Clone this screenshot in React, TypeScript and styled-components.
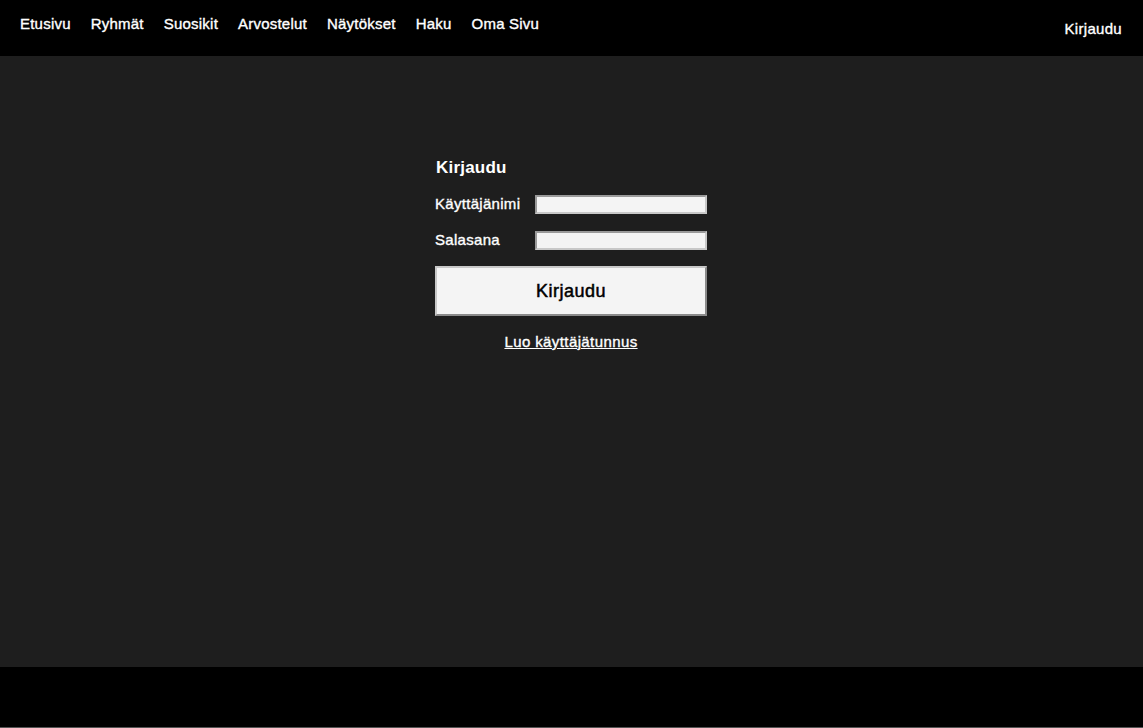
import React from "react";
import styled, { createGlobalStyle } from "styled-components";

const Global = createGlobalStyle`
  html, body { margin: 0; padding: 0; background: #000; }
  body { font-family: "Liberation Sans", Arial, sans-serif; color: #fff; }
  * { box-sizing: border-box; }
`;

const Page = styled.div`
  display: flex;
  flex-direction: column;
  min-height: 728px;
`;

const Header = styled.header`
  height: 56px;
  background: #000;
  display: flex;
  justify-content: space-between;
  padding: 0 21px 0 20px;
`;

const NavList = styled.nav`
  display: flex;
  gap: 20px;
  padding-top: 15px;
`;

const NavLink = styled.a`
  color: #fff;
  font-size: 15px;
  line-height: 17px;
  letter-spacing: 0.22px;
  text-decoration: none;
  font-weight: 400;
  -webkit-text-stroke: 0.35px #fff;
`;

const LoginLink = styled(NavLink)`
  padding-top: 20px;
  letter-spacing: 0.3px;
`;

const Main = styled.main`
  flex: 1;
  background: #1e1e1e;
  display: flex;
  justify-content: center;
  padding-top: 101px;
  padding-right: 1px;
`;

const Form = styled.form`
  width: 272px;
  display: flex;
  flex-direction: column;
`;

const Title = styled.h2`
  margin: 0 0 16px 1px;
  font-size: 17px;
  line-height: 22px;
  letter-spacing: 0.2px;
  font-weight: 700;
`;

const Row = styled.div`
  display: flex;
  align-items: center;
  margin-bottom: 17px;
`;

const Label = styled.label`
  width: 100px;
  font-size: 15px;
  line-height: 17px;
  margin-top: -2px;
  letter-spacing: 0.3px;
  -webkit-text-stroke: 0.35px #fff;
`;

const Input = styled.input`
  width: 172px;
  height: 19px;
  background: #f4f4f4;
  border: 2px solid #9a9a9a;
  border-right-color: #c8c8c8;
  border-bottom-color: #c8c8c8;
  padding: 0 2px;
  font-size: 13px;
`;

const Button = styled.button`
  width: 272px;
  height: 50px;
  margin-top: -1px;
  background: #f4f4f4;
  border: 2px solid #c8c8c8;
  border-right-color: #8a8a8a;
  border-bottom-color: #8a8a8a;
  font-family: "Liberation Sans", Arial, sans-serif;
  font-size: 18px;
  letter-spacing: 0.5px;
  color: #000;
  -webkit-text-stroke: 0.5px #000;
`;

const Register = styled.a`
  align-self: center;
  margin-top: 17px;
  color: #fff;
  font-size: 15px;
  letter-spacing: 0.4px;
  text-decoration: underline;
  -webkit-text-stroke: 0.35px #fff;
`;

const Footer = styled.footer`
  height: 61px;
  background: #000;
  border-bottom: 1px solid #555;
`;

export default function App() {
  const items = ["Etusivu", "Ryhmät", "Suosikit", "Arvostelut", "Näytökset", "Haku", "Oma Sivu"];
  return (
    <Page>
      <Global />
      <Header>
        <NavList>
          {items.map((i) => (
            <NavLink key={i} href="#">{i}</NavLink>
          ))}
        </NavList>
        <LoginLink href="#">Kirjaudu</LoginLink>
      </Header>
      <Main>
        <Form onSubmit={(e) => e.preventDefault()}>
          <Title>Kirjaudu</Title>
          <Row>
            <Label>Käyttäjänimi</Label>
            <Input type="text" />
          </Row>
          <Row>
            <Label>Salasana</Label>
            <Input type="password" />
          </Row>
          <Button type="submit">Kirjaudu</Button>
          <Register href="#">Luo käyttäjätunnus</Register>
        </Form>
      </Main>
      <Footer />
    </Page>
  );
}
